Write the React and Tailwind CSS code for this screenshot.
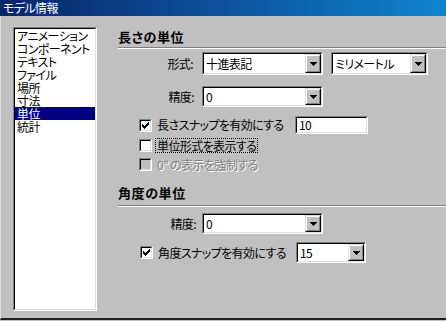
import React from "react";

const FONT = "[font-family:'Noto_Sans_CJK_JP','Noto_Sans_CJK_SC',sans-serif] [font-feature-settings:'palt'] tracking-[-0.6px]";

function Sunken({ className = "", inner = "", children }) {
  return (
    <div className={"border border-t-[#808080] border-l-[#808080] border-b-white border-r-white " + className}>
      <div className={"h-full w-full border border-t-black border-l-black border-b-[#dfdfdf] border-r-[#dfdfdf] " + inner}>
        {children}
      </div>
    </div>
  );
}

function DropButton() {
  return (
    <div className="w-[16px] h-full border border-t-[#dfdfdf] border-l-[#dfdfdf] border-b-black border-r-black">
      <div className="h-full w-full border border-t-white border-l-white border-b-[#808080] border-r-[#808080] bg-[#c0c0c0] flex items-center justify-center">
        <svg width="7" height="4" viewBox="0 0 7 4" shapeRendering="crispEdges">
          <path d="M0 0h7v1H0z M1 1h5v1H1z M2 2h3v1H2z M3 3h1v1H3z" fill="#000" />
        </svg>
      </div>
    </div>
  );
}

function Combo({ value, className = "" }) {
  return (
    <Sunken className={className} inner="bg-white flex items-stretch">
      <div className="flex-1 flex items-center pl-[2px] text-[12px] leading-none text-black whitespace-nowrap overflow-hidden">
        {value}
      </div>
      <DropButton />
    </Sunken>
  );
}

function CheckBox({ checked, disabled }) {
  return (
    <Sunken className="w-[13px] h-[13px] shrink-0" inner={(disabled ? "bg-[#c0c0c0]" : "bg-white") + " flex items-center justify-center"}>
      {checked && (
        <svg width="7" height="7" viewBox="0 0 7 7" shapeRendering="crispEdges">
          <path
            d="M6 0h1v1h-1z M5 1h2v1h-2z M0 2h1v1H0z M4 2h3v1H4z M0 3h2v1H0z M3 3h3v1H3z M0 4h5v1H0z M1 5h3v1H1z M2 6h1v1H2z"
            fill="#000"
          />
        </svg>
      )}
    </Sunken>
  );
}

function Separator() {
  return (
    <div className="flex flex-col">
      <div className="h-px bg-[#808080]" />
      <div className="h-px bg-white" />
    </div>
  );
}

const items = ["アニメーション", "コンポーネント", "テキスト", "ファイル", "場所", "寸法", "単位", "統計"];

export default function App() {
  return (
    <div className={"w-[446px] h-[321px] bg-[#c0c0c0] flex flex-col text-black select-none " + FONT}>
      <div className="h-[16px] bg-gradient-to-r from-[#0a246a] to-[#1084d0] flex items-center pl-[3px]">
        <span className="text-white text-[12px] leading-none">モデル情報</span>
      </div>
      <div className="flex-1 flex border-l border-l-[#dfdfdf] border-b-2 border-b-[#202020] mb-px pt-[11px] pl-[12px]">
        <Sunken className="w-[84px] h-[284px] shrink-0" inner="bg-white flex flex-col">
          {items.map((it) => (
            <div
              key={it}
              className={
                "h-[13px] flex items-center pl-[2px] text-[12px] leading-none whitespace-nowrap " +
                (it === "単位" ? "bg-[#000080] text-white" : "text-black")
              }
            >
              {it}
            </div>
          ))}
        </Sunken>

        <div className="flex-1 flex flex-col ml-[21px] mt-px">
          <div className="h-[16px] flex items-center text-[13px] font-bold leading-none tracking-[0.6px]">長さの単位</div>
          <div className="mt-[3px]">
            <Separator />
          </div>

          <div className="mt-[3px] flex items-center h-[23px]">
            <div className="w-[75px] text-right text-[12px] leading-none">形式:</div>
            <Combo value="十進表記" className="ml-[9px] w-[121px] h-[23px]" />
            <Combo value="ミリメートル" className="ml-[8px] w-[97px] h-[23px]" />
          </div>

          <div className="mt-[11px] flex items-center h-[21px]">
            <div className="w-[76px] text-right text-[12px] leading-none">精度:</div>
            <Combo value="0" className="ml-[8px] w-[121px] h-[21px]" />
          </div>

          <div className="mt-[9px] flex items-center h-[18px] pl-[21px]">
            <CheckBox checked />
            <span className="ml-[5px] w-[138px] text-[12px] leading-none whitespace-nowrap">長さスナップを有効にする</span>
            <Sunken className="w-[73px] h-[18px]" inner="bg-white flex items-center pl-[2px]">
              <span className="text-[12px] leading-none">10</span>
            </Sunken>
          </div>

          <div className="mt-[4px] flex items-center h-[15px] pl-[21px]">
            <CheckBox />
            <span className="ml-[3px] px-[1px] h-[15px] flex items-center border border-dotted border-black text-[12px] leading-none whitespace-nowrap">
              単位形式を表示する
            </span>
          </div>

          <div className="mt-[4px] flex items-center h-[15px] pl-[21px]">
            <CheckBox disabled />
            <span className="ml-[5px] text-[12px] leading-none whitespace-nowrap text-[#808080] [text-shadow:1px_1px_0_#fff]">
              0” の表示を強制する
            </span>
          </div>

          <div className="mt-[12px] h-[16px] flex items-center text-[13px] font-bold leading-none tracking-[0.6px]">角度の単位</div>
          <div className="mt-[5px]">
            <Separator />
          </div>

          <div className="mt-[6px] flex items-center h-[21px]">
            <div className="w-[78px] text-right text-[12px] leading-none">精度:</div>
            <Combo value="0" className="ml-[6px] w-[121px] h-[21px]" />
          </div>

          <div className="mt-[8px] flex items-center h-[21px] pl-[22px]">
            <CheckBox checked />
            <span className="ml-[5px] w-[138px] text-[12px] leading-none whitespace-nowrap">角度スナップを有効にする</span>
            <Combo value="15" className="w-[70px] h-[21px]" />
          </div>
        </div>
      </div>
    </div>
  );
}
